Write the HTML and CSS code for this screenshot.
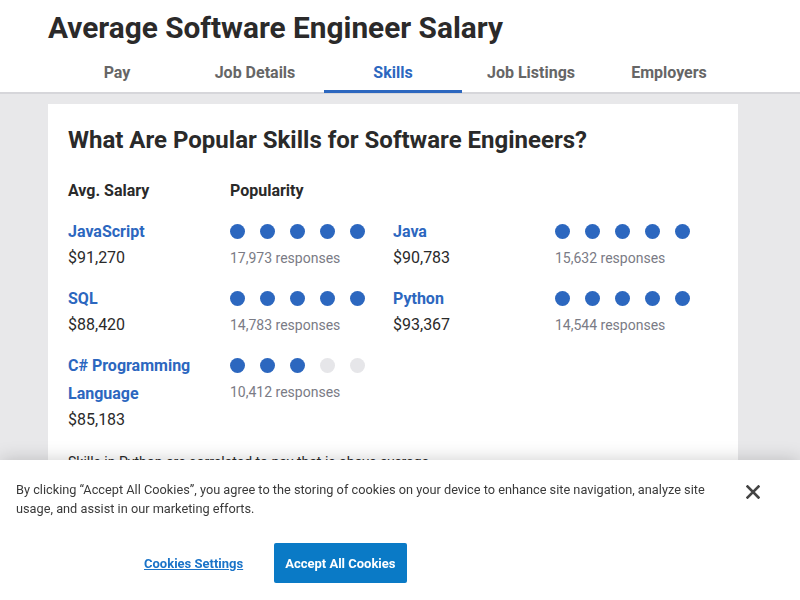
FILE: index.html
```html
<!DOCTYPE html>
<html lang="en">
<head>
<meta charset="utf-8">
<title>Average Software Engineer Salary</title>
<link rel="stylesheet" href="styles.css">
</head>
<body>
<header class="top">
  <h1 class="title">Average Software Engineer Salary</h1>
  <nav class="tabs">
    <a class="tab">Pay</a>
    <a class="tab">Job Details</a>
    <a class="tab active">Skills</a>
    <a class="tab">Job Listings</a>
    <a class="tab">Employers</a>
  </nav>
</header>

<main class="page">
  <section class="card">
    <h2 class="card-title">What Are Popular Skills for Software Engineers?</h2>
    <div class="skills">
      <div class="col-head">
        <span>Avg. Salary</span>
        <span>Popularity</span>
      </div>
      <div class="col-head empty"></div>

      <div class="skill">
        <div class="info"><a class="name">JavaScript</a><div class="salary">$91,270</div></div>
        <div class="pop"><div class="dots"><i class="dot on"></i><i class="dot on"></i><i class="dot on"></i><i class="dot on"></i><i class="dot on"></i></div><div class="resp">17,973 responses</div></div>
      </div>
      <div class="skill">
        <div class="info"><a class="name">Java</a><div class="salary">$90,783</div></div>
        <div class="pop"><div class="dots"><i class="dot on"></i><i class="dot on"></i><i class="dot on"></i><i class="dot on"></i><i class="dot on"></i></div><div class="resp">15,632 responses</div></div>
      </div>
      <div class="skill">
        <div class="info"><a class="name">SQL</a><div class="salary">$88,420</div></div>
        <div class="pop"><div class="dots"><i class="dot on"></i><i class="dot on"></i><i class="dot on"></i><i class="dot on"></i><i class="dot on"></i></div><div class="resp">14,783 responses</div></div>
      </div>
      <div class="skill">
        <div class="info"><a class="name">Python</a><div class="salary">$93,367</div></div>
        <div class="pop"><div class="dots"><i class="dot on"></i><i class="dot on"></i><i class="dot on"></i><i class="dot on"></i><i class="dot on"></i></div><div class="resp">14,544 responses</div></div>
      </div>
      <div class="skill">
        <div class="info"><a class="name">C# Programming Language</a><div class="salary">$85,183</div></div>
        <div class="pop"><div class="dots"><i class="dot on"></i><i class="dot on"></i><i class="dot on"></i><i class="dot"></i><i class="dot"></i></div><div class="resp">10,412 responses</div></div>
      </div>
    </div>
    <p class="note">Skills in Python are correlated to pay that is above average.</p>
    <p class="note">Skills that pay less than market rate include C# Programming Language and SQL.</p>
  </section>
  <div class="filler"></div>
</main>

<div class="cookie">
  <div class="cookie-row">
    <p class="cookie-text">By clicking “Accept All Cookies”, you agree to the storing of cookies on your device to enhance site navigation, analyze site usage, and assist in our marketing efforts.</p>
    <button class="close" aria-label="Close">
      <svg width="14" height="14" viewBox="0 0 14 14"><path d="M1.5 1.5 L12.5 12.5 M12.5 1.5 L1.5 12.5" stroke="#444" stroke-width="2.6" stroke-linecap="square" fill="none"/></svg>
    </button>
  </div>
  <div class="cookie-actions">
    <button class="settings">Cookies Settings</button>
    <button class="accept">Accept All Cookies</button>
  </div>
</div>
</body>
</html>
```

FILE: styles.css
```css
html {
  overflow-y: scroll;
}
body {
  margin: 0;
  background: #e8e8ea;
  font-family: Roboto, "Liberation Sans", sans-serif;
  color: #2a2a2a;
}
.top {
  background: #fff;
  border-bottom: 2px solid #d6d6da;
}
.title {
  margin: 0;
  padding: 10px 0 0 48px;
  font-size: 29.8px;
  line-height: 36px;
  font-weight: 700;
  color: #2b2a2a;
}
.tabs {
  display: flex;
  padding-left: 48px;
  margin-top: 4px;
}
.tab {
  width: 138px;
  text-align: center;
  font-size: 16px;
  font-weight: 700;
  line-height: 19px;
  padding: 13px 0 8px;
  color: #666;
  border-bottom: 3px solid transparent;
  margin-bottom: -1px;
}
.tab.active {
  color: #2c67bf;
  border-bottom-color: #2c67bf;
}
.page {
  padding: 10px 0 0 48px;
}
.card {
  width: 650px;
  background: #fff;
  padding: 20px;
}
.card-title {
  margin: 0;
  padding-top: 2px;
  font-size: 24px;
  line-height: 28px;
  font-weight: 700;
  color: #2a2a2a;
}
.skills {
  display: grid;
  grid-template-columns: 325px 325px;
  row-gap: 15px;
  margin-top: 27px;
}
.col-head {
  display: grid;
  grid-template-columns: 162px 1fr;
  font-size: 16px;
  font-weight: 700;
  line-height: 20px;
  margin-bottom: 2px;
}
.skill {
  display: grid;
  grid-template-columns: 162px 1fr;
}
.name {
  display: block;
  font-size: 16px;
  font-weight: 700;
  line-height: 28px;
  color: #2c67bf;
  padding-right: 20px;
}
.salary {
  font-size: 16px;
  line-height: 24px;
  color: #2a2a2a;
}
.dots {
  display: flex;
  gap: 15px;
  height: 26px;
  align-items: center;
}
.dot {
  width: 15px;
  height: 15px;
  border-radius: 50%;
  background: #e6e6e9;
}
.dot.on {
  background: #2c67bf;
}
.resp {
  margin-top: 2px;
  font-size: 14px;
  line-height: 24px;
  color: #7a7b85;
}
.note {
  margin: 20px 0 0;
  font-size: 14px;
  line-height: 20px;
  color: #2a2a2a;
}
.note + .note {
  margin-top: 10px;
}
.filler {
  height: 7000px;
}
.cookie {
  position: fixed;
  left: 0;
  right: 0;
  bottom: 0;
  height: 140px;
  box-sizing: border-box;
  background: #fff;
  box-shadow: 0 0 18px rgba(0, 0, 0, 0.2);
  padding: 21px 0 0 16px;
}
.cookie-row {
  display: flex;
  align-items: flex-start;
}
.cookie-text {
  margin: 0;
  width: 700px;
  font-size: 12.75px;
  line-height: 18.5px;
  color: #3a3a3a;
}
.close {
  margin: 4px 0 0 30px;
  padding: 0;
  border: 0;
  background: none;
  width: 14px;
  height: 14px;
  display: flex;
}
.cookie-actions {
  display: flex;
  gap: 15px;
  margin: 25px 0 0 112px;
}
.settings {
  border: 0;
  background: none;
  padding: 0 16px;
  height: 40px;
  font-family: Roboto, "Liberation Sans", sans-serif;
  font-size: 13px;
  font-weight: 700;
  color: #1a73c8;
  text-decoration: underline;
}
.accept {
  border: 0;
  border-radius: 2px;
  background: #0a7ac6;
  color: #fff;
  height: 40px;
  padding: 0 11px;
  font-family: Roboto, "Liberation Sans", sans-serif;
  font-size: 13px;
  font-weight: 700;
}
```
